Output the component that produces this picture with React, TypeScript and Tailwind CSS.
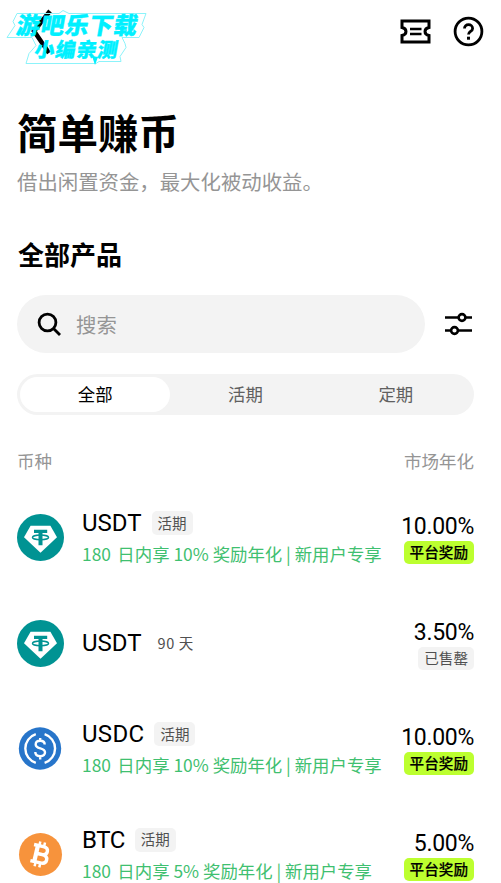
import { useState } from 'react';
import clsx from 'clsx';

interface Product {
  id: number;
  coin: 'USDT' | 'USDC' | 'BTC';
  term: string;
  flexible: boolean;
  bonus?: string;
  apy: string;
  soldOut?: boolean;
}

const products: Product[] = [
  { id: 1, coin: 'USDT', term: '活期', flexible: true, bonus: '10%', apy: '10.00%' },
  { id: 2, coin: 'USDT', term: '90 天', flexible: false, apy: '3.50%', soldOut: true },
  { id: 3, coin: 'USDC', term: '活期', flexible: true, bonus: '10%', apy: '10.00%' },
  { id: 4, coin: 'BTC', term: '活期', flexible: true, bonus: '5%', apy: '5.00%' },
];

const tabs = ['全部', '活期', '定期'];

function CoinIcon({ coin }: { coin: Product['coin'] }) {
  if (coin === 'USDT') {
    return (
      <svg width="47" height="47" viewBox="0 0 47 47">
        <circle cx="23.5" cy="23.5" r="23.5" fill="#009393" />
        <path d="M13.6 11.8h19.8l6.6 11.4-16.500 15.600L7 23.200z" fill="#fff" />
        <path d="M17 15.700h13.200v3.300h-4.700v12.200h-4V19H17z" fill="#009393" />
        <ellipse cx="23.5" cy="23.400" rx="8" ry="2.300" fill="none" stroke="#009393" strokeWidth="1.500" />
      </svg>
    );
  }

  if (coin === 'USDC') {
    return (
      <svg width="47" height="47" viewBox="0 0 47 47">
        <circle cx="23" cy="23.5" r="21.2" fill="#2775ca" />
        <g fill="none" stroke="#fff" strokeWidth="2.4">
          <path d="M18.800 9.200a15 15 0 0 0 0 28.600M27.600 9.200a15 15 0 0 1 0 28.600" />
          <path d="M27.700 19.600c0-2.400-1.800-3.800-4.500-3.800s-4.500 1.300-4.500 3.600c0 5.200 9.300 2.700 9.300 7.900 0 2.400-1.900 3.900-4.800 3.900s-4.900-1.500-4.900-4.100M23.200 13v3M23.200 31v3.500" />
        </g>
      </svg>
    );
  }

  return (
    <svg width="47" height="47" viewBox="0 0 47 47">
      <circle cx="23.5" cy="23.5" r="21.5" fill="#f7933c" />
      <g transform="rotate(13 23.5 23.5)" fill="none" stroke="#fff">
        <path d="M15 15.200h9.600c3.200 0 4.900 1.500 4.900 3.900s-1.700 4-4.900 4h-5.300M18.700 23.300h6.500c3.600 0 5.500 1.600 5.500 4.200s-1.900 4.200-5.500 4.200H15" strokeWidth="3.400" />
        <path d="M19 14v18.500" strokeWidth="4.200" />
        <path d="M20.400 10.800V15M25.200 10.800V15M20.400 32v4.300M25.200 32v4.300" strokeWidth="2.500" />
      </g>
    </svg>
  );
}

function Watermark() {
  return (
    <div className="absolute left-[6px] top-[8px] h-[60px] w-[142px] font-black leading-none text-[#00f0ff]">
      <svg className="absolute inset-0" width="142" height="60" viewBox="0 0 142 60" fill="none" stroke="#8cf3fa" strokeWidth="1">
        <path d="M11 5.500h42l4-3 6 3h77l-4 11 2 3-5 10h-17l3 6 1 4-6 9 1 5h-22l-3 2H20l3-10 7-8-4-8H1l8-12-2-4z" />
      </svg>
      <span className="absolute left-[11px] top-[5px] -skew-x-[10deg] whitespace-nowrap text-[23.500px] tracking-[0.8px] [-webkit-text-stroke:0.4px_#00f0ff]">游吧乐下载</span>
      <span className="absolute left-[29px] top-[30.500px] -skew-x-[10deg] whitespace-nowrap text-[20px] tracking-[1px] [-webkit-text-stroke:0.4px_#00f0ff]">小编亲测</span>
      <svg className="absolute left-[85px] top-[48px]" width="8" height="10" viewBox="0 0 8 10" fill="#00f0ff">
        <path d="M1 0l6 1-3 8z" />
      </svg>
    </div>
  );
}

function ProductRow({ product }: { product: Product }) {
  return (
    <li className="flex h-[105.500px] items-center">
      <CoinIcon coin={product.coin} />

      <div className="ml-[18px] flex-1">
        <div className="flex h-[30px] items-center">
          <span className={clsx('font-[Roboto] text-[24px] leading-[30px] text-black', product.coin === 'BTC' && 'tracking-[-0.5px]', product.coin === 'USDC' && 'tracking-[0.3px]')}>
            {product.coin}
          </span>
          <span
            className={clsx(
              'ml-[10px] flex h-[24px] items-center whitespace-nowrap rounded-[5px] px-[6px] pb-px text-[14.500px] text-[#505050]',
              product.flexible ? 'bg-[#f3f3f3]' : 'tracking-[0.6px]'
            )}
          >
            {product.term}
          </span>
        </div>
        {product.bonus && (
          <p className="mt-[3px] whitespace-nowrap text-[17.400px] leading-[26px] text-[#3fc070]">
            <span className="mr-[2.500px]">180</span> 日内享 {product.bonus} 奖励年化 | 新用户专享
          </p>
        )}
      </div>

      <div className="flex flex-col items-end pt-[2px]">
        <span className="font-[Roboto] text-[23px] leading-[28px] tracking-[-0.3px] text-black">{product.apy}</span>
        {product.soldOut ? (
          <span className="flex h-[23px] items-center rounded-[5px] bg-[#f3f3f3] px-[6px] pb-px text-[14.600px] text-[#505050]">已售罄</span>
        ) : (
          <span className="flex h-[23px] items-center rounded-[5px] bg-[#bcff2f] px-[6px] pb-px text-[14.600px] font-medium text-black [-webkit-text-stroke:0.2px_#000]">平台奖励</span>
        )}
      </div>
    </li>
  );
}

export default function App() {
  const [activeTab, setActiveTab] = useState(0);

  return (
    <div lang="zh-CN" className="h-[883px] w-[501px] overflow-hidden bg-white pl-[17px] pr-[27px] font-['Noto_Sans_CJK_SC',sans-serif]">
      {/* Top bar */}
      <header className="relative -ml-[17px] -mr-[27px] flex h-[63px] items-center justify-between pl-[30px] pr-[17px]">
        <svg width="24" height="46" viewBox="0 0 24 46" fill="none" stroke="#000" strokeWidth="4.500">
          <path d="M20 2L4 22l15 22" />
        </svg>
        <Watermark />
        <div className="flex items-center gap-[22px]">
          <svg width="31" height="25" viewBox="0 0 31 25" fill="none" stroke="#000" strokeWidth="3">
            <path d="M2 2h27v6.500c-5.300 1-5.300 7 0 8V23H2v-6.500c5.300-1 5.300-7 0-8z" />
            <path d="M10 10h11.500M10 15h11.500" strokeWidth="2.600" />
          </svg>
          <svg width="31" height="31" viewBox="0 0 31 31" fill="none" stroke="#000">
            <circle cx="15.500" cy="15.500" r="13.400" strokeWidth="2.800" />
            <path d="M11.500 12.600c0-2.300 1.700-3.900 4-3.900s4.100 1.500 4.100 3.700c0 3-4.100 3.100-4.100 6.100" strokeWidth="2.800" />
            <path d="M15.500 20.700v3" strokeWidth="3" />
          </svg>
        </div>
      </header>

      <h1 className="mt-[40px] text-[40.500px] font-bold leading-[58px] text-black">简单赚币</h1>
      <p className="mt-[5px] text-[20.400px] leading-[30px] text-[#959595]">借出闲置资金，最大化被动收益。</p>

      <h2 className="mt-[39px] pl-px text-[26px] font-bold leading-[38px] text-black">全部产品</h2>

      {/* Search */}
      <div className="mt-[22px] flex items-center justify-between">
        <div className="flex h-[58px] w-[408px] items-center rounded-full bg-[#f3f3f3] pl-[20px]">
          <svg width="25" height="25" viewBox="0 0 25 25" fill="none" stroke="#000" strokeWidth="2.800">
            <circle cx="10.500" cy="10.500" r="8.400" />
            <path d="M16.500 16.500l6.500 6.500" />
          </svg>
          <span className="ml-[14px] text-[20.400px] text-[#959595]">搜索</span>
        </div>
        <svg className="mr-[2px]" width="27" height="24" viewBox="0 0 27 24" fill="none" stroke="#000" strokeWidth="2.600">
          <path d="M0 5.500h13.500M20.500 5.500H27M0 18.500h6M13 18.500h14" />
          <circle cx="17" cy="5.500" r="3.400" />
          <circle cx="9.500" cy="18.500" r="3.400" />
        </svg>
      </div>

      {/* Tabs */}
      <div className="mt-[21px] flex h-[41px] rounded-full bg-[#f3f3f3] p-[3px]">
        {tabs.map((tab, i) => (
          <button
            key={tab}
            onClick={() => setActiveTab(i)}
            className={clsx('flex-1 rounded-full pb-px text-[17.400px]', i === activeTab ? 'bg-white text-black' : 'text-[#606060]')}
          >
            {tab}
          </button>
        ))}
      </div>

      <div className="mt-[32px] flex justify-between text-[17.500px] leading-[28px] text-[#959595]">
        <span>币种</span>
        <span>市场年化</span>
      </div>

      <ul className="mt-[10px]">
        {products.map((product) => (
          <ProductRow key={product.id} product={product} />
        ))}
      </ul>
    </div>
  );
}
